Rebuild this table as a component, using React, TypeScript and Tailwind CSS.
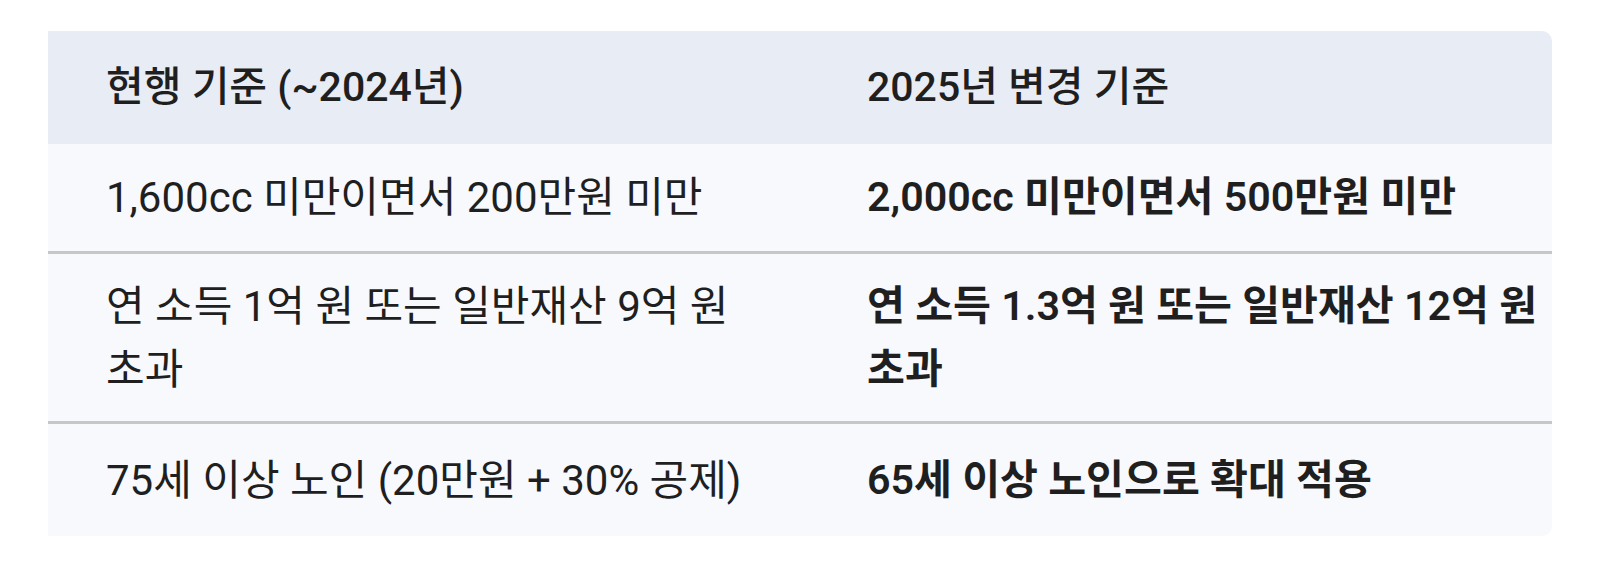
import React from "react";

const rows: { a: React.ReactNode; b: React.ReactNode; h: string }[] = [
  {
    a: "1,600cc 미만이면서 200만원 미만",
    b: "2,000cc 미만이면서 500만원 미만",
    h: "h-[110px]",
  },
  {
    a: (
      <>
        연 소득 1억 원 또는 일반재산 9억 원
        <br />
        초과
      </>
    ),
    b: (
      <>
        연 소득 1.3억 원 또는 일반재산 12억 원
        <br />
        초과
      </>
    ),
    h: "h-[170px]",
  },
  {
    a: "75세 이상 노인 (20만원 + 30% 공제)",
    b: "65세 이상 노인으로 확대 적용",
    h: "h-[112px]",
  },
];

export default function App() {
  return (
    <div
      className="min-h-[561px] w-[1600px] bg-white pl-[48px] pt-[31px]"
      style={{ fontFamily: 'Roboto, "Noto Sans CJK KR", sans-serif' }}
    >
      <div className="w-[1504px] overflow-hidden rounded-r-[10px] text-[#1f1f1f]">
        <div className="flex h-[113px] items-center bg-[#e8ecf4] text-[41px] font-medium leading-[63px]">
          <div className="w-[819px] shrink-0 pl-[58px] pr-[60px]">현행 기준 (~2024년)</div>
          <div className="flex-1">2025년 변경 기준</div>
        </div>
        {rows.map((r, i) => (
          <div
            key={i}
            className={`flex ${r.h} items-center bg-[#f8f9fd] text-[42px] leading-[63px] whitespace-nowrap ${
              i < rows.length - 1 ? "border-b-[3px] border-[#c7c7c7]" : ""
            }`}
          >
            <div className="w-[819px] shrink-0 pl-[58px] pr-[60px] font-normal">{r.a}</div>
            <div className="flex-1 text-[41.2px] font-semibold">{r.b}</div>
          </div>
        ))}
      </div>
    </div>
  );
}
